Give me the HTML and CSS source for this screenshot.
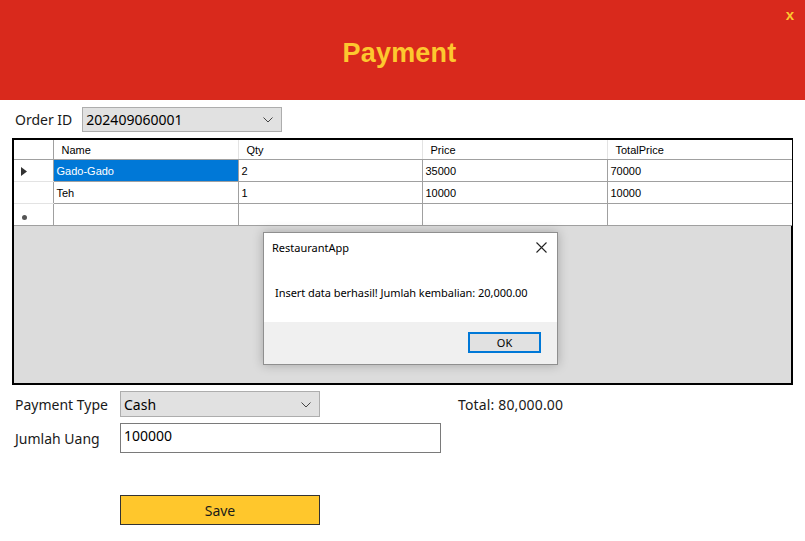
FILE: index.html
```html
<!DOCTYPE html>
<html>
<head>
<meta charset="utf-8">
<link rel="stylesheet" href="styles.css">
</head>
<body>
<div class="window">
  <header class="topbar">
    <h1 class="title">Payment</h1>
    <span class="close">x</span>
  </header>

  <div class="order-row">
    <span class="label">Order ID</span>
    <div class="combo combo-order">
      <span class="combo-text">202409060001</span>
      <svg class="chev" width="10" height="6" viewBox="0 0 10 6"><path d="M0.5 0.5 L5 5 L9.5 0.5" fill="none" stroke="#444" stroke-width="1"/></svg>
    </div>
  </div>

  <div class="grid">
    <table class="dgv">
      <colgroup>
        <col class="c-rh"><col class="c-name"><col class="c-qty"><col class="c-price"><col class="c-total">
      </colgroup>
      <thead>
        <tr><th class="rh"></th><th>Name</th><th>Qty</th><th>Price</th><th>TotalPrice</th></tr>
      </thead>
      <tbody>
        <tr><td class="rh"><svg width="6" height="9" viewBox="0 0 6 9"><path d="M0 0 L6 4.5 L0 9 Z" fill="#333"/></svg></td><td class="sel">Gado-Gado</td><td>2</td><td>35000</td><td>70000</td></tr>
        <tr><td class="rh"></td><td>Teh</td><td>1</td><td>10000</td><td>10000</td></tr>
        <tr><td class="rh"><span class="star"></span></td><td></td><td></td><td></td><td></td></tr>
      </tbody>
    </table>
  </div>

  <div class="form">
    <div class="form-row">
      <span class="label flabel">Payment Type</span>
      <div class="combo combo-pay">
        <span class="combo-text">Cash</span>
        <svg class="chev" width="10" height="6" viewBox="0 0 10 6"><path d="M0.5 0.5 L5 5 L9.5 0.5" fill="none" stroke="#444" stroke-width="1"/></svg>
      </div>
      <span class="label total">Total: 80,000.00</span>
    </div>
    <div class="form-row row2">
      <span class="label flabel">Jumlah Uang</span>
      <div class="textbox">100000</div>
    </div>
    <div class="form-row row3">
      <span class="flabel"></span>
      <button class="save">Save</button>
    </div>
  </div>

  <div class="dialog">
    <div class="dlg-title">
      <span>RestaurantApp</span>
      <svg class="dlg-x" width="11" height="11" viewBox="0 0 11 11"><path d="M0.5 0.5 L10.5 10.5 M10.5 0.5 L0.5 10.5" stroke="#222" stroke-width="1.1"/></svg>
    </div>
    <div class="dlg-body">Insert data berhasil! Jumlah kembalian: 20,000.00</div>
    <div class="dlg-foot"><button class="ok">OK</button></div>
  </div>
</div>
</body>
</html>
```

FILE: styles.css
```css
* { box-sizing: border-box; }
html, body { margin: 0; padding: 0; background: #fff; }
body { width: 805px; height: 541px; overflow: hidden; font-family: "Noto Sans", "Liberation Sans", sans-serif; color: #1a1a1a; }
.window { position: relative; width: 805px; height: 541px; background: #fff; }

.topbar { height: 100px; background: #d9291c; display: flex; align-items: center; justify-content: center; position: relative; }
.title { margin: 0 0 0 -6px; padding-top: 6px; font-family: "Liberation Sans", Arial, sans-serif; font-weight: bold; font-size: 27px; color: #fdc82f; letter-spacing: 0.2px; }
.close { position: absolute; right: 11px; top: 6px; font-family: "Liberation Sans", Arial, sans-serif; font-weight: bold; font-size: 15px; color: #fdc82f; }

.label { font-size: 14px; color: #1a1a1a; }

.order-row { display: flex; align-items: center; gap: 10px; padding: 7px 0 0 15px; height: 32px; }
.combo { display: flex; align-items: center; justify-content: space-between; background: #e1e1e1; border: 1px solid #adadad; padding: 0 8px 0 3px; }
.combo-order { width: 200px; height: 25px; }
.combo-text { font-size: 14px; color: #000; }
.chev { margin-top: 1px; }

.grid { margin: 6px 12px 0 12px; height: 247px; border: 2px solid #000; background: #dcdcdc; }
.dgv { border-collapse: collapse; table-layout: fixed; width: 778px; font-family: "Liberation Sans", Arial, sans-serif; font-size: 11px; color: #000; background: #fff; }
.c-rh { width: 39px; } .c-name { width: 185px; } .c-qty { width: 184px; } .c-price { width: 185px; } .c-total { width: 185px; }
.dgv th { height: 19px; font-weight: normal; text-align: left; padding: 2px 0 0 8px; border-right: 1px solid #e3e3e3; border-bottom: 1px solid #a0a0a0; background: #fff; }
.dgv th:last-child { border-right: none; }
.dgv td { height: 22px; padding: 1px 0 0 3px; border: 1px solid #a0a0a0; border-top: none; border-left: none; }
.dgv td:last-child { border-right: none; }
.dgv .rh { border-right: 1px solid #a0a0a0; border-bottom: 1px solid #e3e3e3; padding: 3px 0 0 7px; vertical-align: middle; }
.dgv th.rh { border-bottom: 1px solid #a0a0a0; }
.dgv tr:last-child .rh { border-bottom: 1px solid #a0a0a0; }
.dgv .sel { background: #0078d7; color: #fff; }
.star { display: inline-block; width: 5px; height: 5px; border-radius: 50%; background: #555; margin-left: 1px; }

.form { padding: 6px 0 0 15px; }
.form-row { display: flex; align-items: center; height: 26px; }
.flabel { width: 105px; }
.combo-pay { width: 200px; height: 26px; }
.total { margin-left: 138px; letter-spacing: 0.15px; }
.row2 { margin-top: 6px; height: 30px; }
.textbox { width: 321px; height: 30px; border: 1px solid #7a7a7a; font-size: 14px; color: #000; padding: 2px 0 0 3px; align-self: flex-start; }
.row3 { margin-top: 42px; height: 30px; }
.save { width: 200px; height: 30px; background: #ffc72c; border: 1px solid #333; font-family: "Noto Sans", "Liberation Sans", sans-serif; font-size: 14px; color: #1a1a1a; padding: 0; }

.dialog { position: absolute; left: 263px; top: 232px; width: 295px; height: 133px; background: #fff; border: 1px solid #8f8f8f; box-shadow: 0 0 10px rgba(0,0,0,0.25); display: flex; flex-direction: column; font-size: 11px; }
.dlg-title { height: 28px; display: flex; align-items: center; justify-content: space-between; padding: 0 10px 0 8px; color: #000; }
.dlg-x { margin-top: 0; }
.dlg-body { flex: 1; padding: 24px 0 0 11px; color: #000; letter-spacing: -0.05px; }
.dlg-foot { height: 42px; background: #f0f0f0; display: flex; justify-content: flex-end; align-items: flex-start; padding: 10px 16px 0 0; }
.ok { width: 73px; height: 21px; background: #e1e1e1; border: 2px solid #0078d7; font-family: "Noto Sans", "Liberation Sans", sans-serif; font-size: 11px; color: #000; padding: 0; }
```
